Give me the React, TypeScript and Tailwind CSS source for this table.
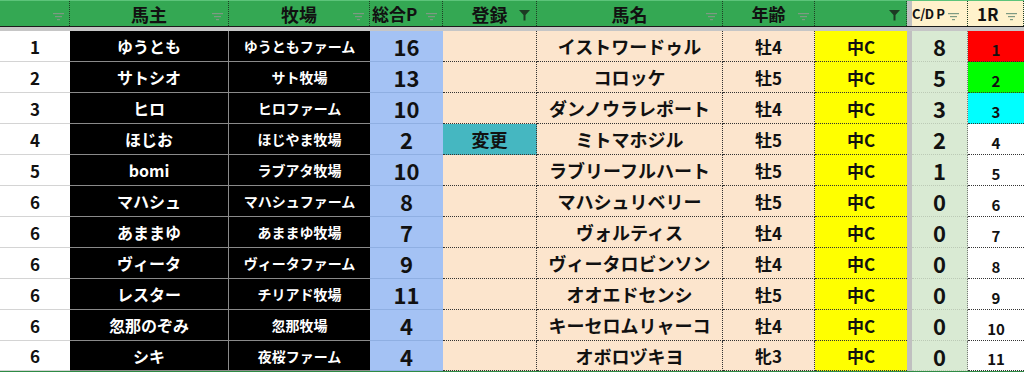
const rows: [number, string, string, number, string, string, string, number, number, string][] = [
  [1, 'ゆうとも', 'ゆうともファーム', 16, '', 'イストワードゥル', '牡4', 8, 1, 'bg-[#ff0000]'],
  [2, 'サトシオ', 'サト牧場', 13, '', 'コロッケ', '牡5', 5, 2, 'bg-[#00ff00]'],
  [3, 'ヒロ', 'ヒロファーム', 10, '', 'ダンノウラレポート', '牡4', 3, 3, 'bg-[#00ffff]'],
  [4, 'ほじお', 'ほじやま牧場', 2, '変更', 'ミトマホジル', '牡5', 2, 4, 'bg-white'],
  [5, 'bomi', 'ラブアタ牧場', 10, '', 'ラブリーフルハート', '牡5', 1, 5, 'bg-white'],
  [6, 'マハシュ', 'マハシュファーム', 8, '', 'マハシュリベリー', '牡5', 0, 6, 'bg-white'],
  [6, 'あままゆ', 'あままゆ牧場', 7, '', 'ヴォルティス', '牡4', 0, 7, 'bg-white'],
  [6, 'ヴィータ', 'ヴィータファーム', 9, '', 'ヴィータロビンソン', '牡4', 0, 8, 'bg-white'],
  [6, 'レスター', 'チリアド牧場', 11, '', 'オオエドセンシ', '牡5', 0, 9, 'bg-white'],
  [6, '忽那のぞみ', '忽那牧場', 4, '', 'キーセロムリャーコ', '牡4', 0, 10, 'bg-white'],
  [6, 'シキ', '夜桜ファーム', 4, '', 'オボロヅキヨ', '牝3', 0, 11, 'bg-white'],
]

function Filter({ active, pos = 'right-[5px]' }: { active?: boolean; pos?: string }) {
  if (active) {
    return (
      <svg width="11" height="11" viewBox="0 0 11 11" className="absolute right-[6px] bottom-[5px]">
        <path d="M0 0H11L6.5 5V10.5H4.5V5Z" fill="#1d3b23" />
      </svg>
    )
  }
  return (
    <svg width="11" height="8" viewBox="0 0 11 8" className={`absolute ${pos} bottom-[5px]`}>
      <rect x="0" y="0" width="11" height="1.2" fill="#7d9a83" />
      <rect x="2" y="3" width="7" height="1.2" fill="#7d9a83" />
      <rect x="4" y="6" width="3" height="1.2" fill="#7d9a83" />
    </svg>
  )
}

function Head({ w, label, align = 'justify-center', active, cream, text = 'text-[17px]', pos }: { w: string; label?: string; align?: string; active?: boolean; cream?: boolean; text?: string; pos?: string }) {
  return (
    <div
      className={`relative h-full ${w} ${cream ? 'bg-[#fff2cc]' : 'bg-[#34a853]'} border-r border-dotted border-[#1f3d25] flex items-center ${align} ${text} font-bold text-[#111]`}
    >
      {label}
      <Filter active={active} pos={pos} />
    </div>
  )
}

export default function App() {
  return (
    <div className="w-[1024px] h-[372px] overflow-hidden bg-white font-['Noto_Sans_CJK_JP','Noto_Sans',sans-serif] leading-none">
      <div className="flex h-[27px] border-t border-[#5cc47a] border-b border-b-[#1c1c1c]">
        <Head w="w-[70px]" />
        <Head w="w-[159px]" label="馬主" text="text-[18px]" />
        <Head w="w-[141px]" label="牧場" text="text-[18px]" />
        <Head w="w-[73px]" label="総合P" align="justify-start pl-[2px]" />
        <Head w="w-[94px]" label="登録" active text="text-[18px]" />
        <Head w="w-[186px]" label="馬名" text="text-[18px]" />
        <Head w="w-[92px]" label="年齢" />
        <Head w="w-[92px]" active />
        <div className="w-[5px] h-full bg-[#c0c0c0]" />
        <Head w="w-[56px]" label="C/D P" align="justify-start pl-0" cream text="text-[13px] tracking-[-0.4px]" pos="right-[8px]" />
        <Head w="w-[56px]" label="1R" align="justify-start pl-[9px]" cream text="text-[17px]" pos="right-[6px]" />
      </div>
      <div className="h-[4px] bg-[#c6c6c6]" />
      {rows.map((r, i) => {
        const last = i === rows.length - 1
        return (
          <div key={i} className={`flex h-[31px] ${last ? 'border-b border-[#2e8b45]' : ''}`}>
            <div className="w-[70px] h-full flex items-center justify-center border-b border-[#d4d4d4] text-[17px] font-bold text-[#111]">
              {r[0]}
            </div>
            <div className="w-[159px] h-full flex items-center justify-center bg-black border-b border-r border-[#8a8a8a] text-[16px] font-bold text-white">
              {r[1]}
            </div>
            <div className="w-[141px] h-full flex items-center justify-center bg-black border-b border-[#8a8a8a] text-[14px] font-bold text-white">
              {r[2]}
            </div>
            <div className="w-[73px] h-full flex items-center justify-center bg-[#a4c2f4] border-b border-[#8fafe2] text-[22px] font-bold text-[#111]">
              {r[3]}
            </div>
            <div
              className={`w-[94px] h-full flex items-center justify-center border-b border-r border-dotted border-[#333] text-[18px] font-bold text-[#111] ${r[4] ? 'bg-[#45b7c1]' : 'bg-[#fce5cd]'}`}
            >
              {r[4]}
            </div>
            <div className="w-[186px] h-full flex items-center justify-center bg-[#fce5cd] border-b border-r border-dotted border-[#333] text-[18px] font-bold text-[#111]">
              {r[5]}
            </div>
            <div className="w-[92px] h-full flex items-center justify-center bg-[#fce5cd] border-b border-r border-dotted border-[#333] text-[17px] font-bold text-[#111]">
              {r[6]}
            </div>
            <div className="w-[92px] h-full flex items-center justify-center bg-[#ffff00] border-b border-dotted border-[#333] text-[17px] font-bold text-[#111]">
              中C
            </div>
            <div className="w-[5px] h-full bg-[#c0c0c0]" />
            <div className="w-[56px] h-full flex items-center justify-center bg-[#d9ead3] border-b border-r border-[#bccab6] border-r-[#777] border-dotted text-[22px] font-bold text-[#111]">
              {r[7]}
            </div>
            <div className={`w-[56px] h-full flex items-end justify-center pb-[4px] ${r[9]} border-b border-dotted border-[#333] text-[15px] font-bold text-[#111]`}>
              {r[8]}
            </div>
          </div>
        )
      })}
    </div>
  )
}
